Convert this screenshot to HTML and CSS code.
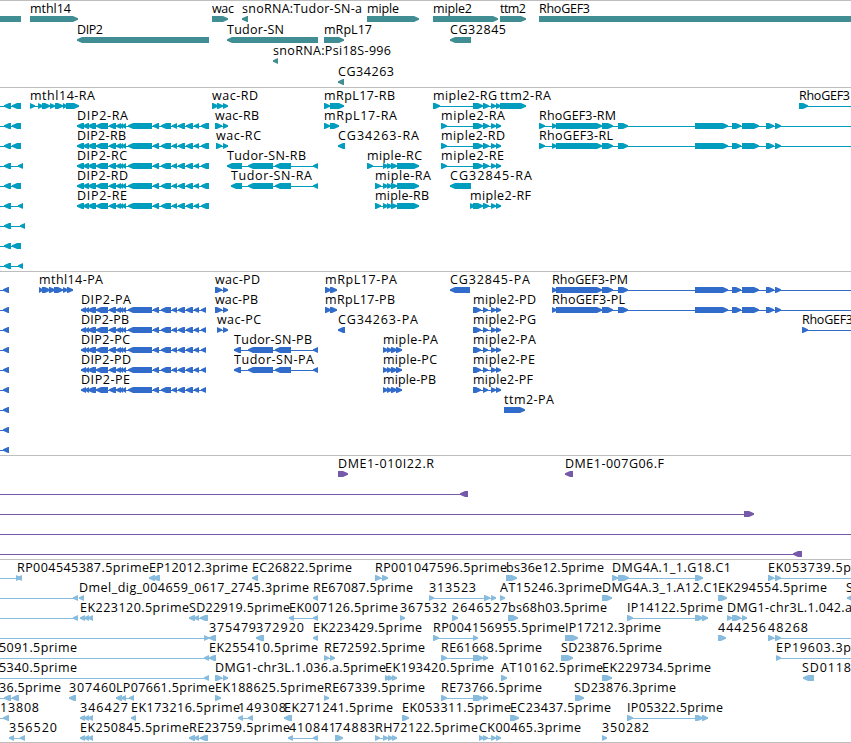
FILE: index.html
```html
<!DOCTYPE html>
<html lang="en">
<head>
    <meta charset="UTF-8">
    <title>Genome tracks</title>
    <link rel="stylesheet" href="styles.css">
</head>
<body>
    <div class="browser">
        <div class="track genes" id="genes"></div>
        <div class="track transcripts" id="transcripts"></div>
        <div class="track proteins" id="proteins"></div>
        <div class="track clones" id="clones"></div>
        <div class="track ests" id="ests"></div>
    </div>
    <script src="tracks.js"></script>
</body>
</html>
```
FILE: styles.css
```css
body {
    margin: 0;
    background-color: #fff;
}
.browser {
    display: flex;
    flex-direction: column;
    width: 851px;
    overflow: hidden;
    border-bottom: 1px solid #bebebe;
}
.track {
    box-sizing: border-box;
    border-top: 1px solid #bebebe;
    overflow: hidden;
}
.track svg {
    display: block;
}
.genes {
    height: 87px;
    color: #408e93;
}
.transcripts {
    height: 184px;
    color: #009dbf;
}
.proteins {
    height: 184px;
    color: #316ccb;
}
.clones {
    height: 104px;
    color: #7659a8;
}
.ests {
    height: 183px;
    color: #88bcde;
}
.exon {
    fill: currentColor;
}
.intron {
    fill: currentColor;
    shape-rendering: crispEdges;
}
.label {
    fill: #000;
    font-family: "Open Sans", "Noto Sans", sans-serif;
    font-size: 12.5px;
}
```
FILE: tracks.js
```js
// feature: [row, label, label start, label end, strand, exons, line start, line end]
var dip2 = [88,96, 96,108, 109,116, 116,121, 120,123, 122,126, 128,152, 153,159, 161,171, 172,177, 178,185, 186,193, 194,199];
var dip2R = [77,84, 83,89].concat(dip2, [201,209]);
var dip2P = [81,86, 85,89].concat(dip2, [201,206]);
var tudor = [248,273, 275,291, 313,318];
var miple = [383,388, 387,392, 391,397, 397,419];
var miple2 = [473,483, 483,489, 491,496, 496,501];
var miple2P = [473,481, 483,488, 491,496, 496,501];
var rho = [552,557, 556,602, 602,613, 618,628, 695,728, 732,741, 742,759, 766,774, 775,781];

var genes = [
    [0, '', 0, 0, '<', [-10,21]],
    [0, 'mthl14', 30, 71, '>', [30,78]],
    [0, 'wac', 212, 234, '>', [212,228]],
    [0, 'snoRNA:Tudor-SN-a', 242, 362, '<', [242,248]],
    [0, 'miple', 367, 399, '>', [367,419]],
    [0, 'miple2', 433, 472, '>', [433,498]],
    [0, 'ttm2', 500, 526, '>', [500,526]],
    [0, 'RhoGEF3', 539, 590, '>', [539,870]],
    [1, 'DIP2', 77, 103, '<', [77,209]],
    [1, 'Tudor-SN', 227, 284, '<', [227,318]],
    [1, 'mRpL17', 324, 372, '>', [324,344]],
    [1, 'CG32845', 450, 506, '<', [450,471]],
    [2, 'snoRNA:Psi18S-996', 273, 391, '<', [273,278]],
    [3, 'CG34263', 338, 394, '<', [338,344]]
];

var transcripts = [
    [0, '', 0, 0, '<', [4,11, 12,21], 0],
    [1, '', 0, 0, '<', [4,11, 12,21], 0],
    [2, '', 0, 0, '<', [4,11, 12,21], 0],
    [3, '', 0, 0, '<', [4,11, 18,23], 0],
    [4, '', 0, 0, '<', [4,11, 12,21], 0],
    [5, '', 0, 0, '<', [4,11, 18,23], 0],
    [6, '', 0, 0, '<', [4,11, 20,25], 0],
    [7, '', 0, 0, '<', [4,11, 12,21], 0],
    [8, '', 0, 0, '<', [4,11, 18,23], 0],
    [0, 'mthl14-RA', 30, 95, '>', [30,35, 38,43, 42,50, 50,55, 55,63, 63,67, 66,79]],
    [1, 'DIP2-RA', 77, 128, '<', dip2R],
    [2, 'DIP2-RB', 77, 126, '<', dip2R],
    [3, 'DIP2-RC', 77, 127, '<', dip2R],
    [4, 'DIP2-RD', 77, 128, '<', dip2R],
    [5, 'DIP2-RE', 77, 127, '<', dip2R],
    [0, 'wac-RD', 212, 258, '>', [212,218, 217,223, 223,228]],
    [1, 'wac-RB', 215, 259, '>', [215,222, 223,228]],
    [2, 'wac-RC', 216, 261, '>', [216,222, 223,228]],
    [3, 'Tudor-SN-RB', 227, 306, '<', [227,242].concat(tudor)],
    [4, 'Tudor-SN-RA', 231, 312, '<', [231,242].concat(tudor)],
    [0, 'mRpL17-RB', 324, 395, '>', [324,330, 330,344]],
    [1, 'mRpL17-RA', 324, 397, '>', [324,330, 330,339]],
    [2, 'CG34263-RA', 338, 419, '<', [338,345]],
    [3, 'miple-RC', 367, 422, '>', [367,373].concat(miple)],
    [4, 'miple-RA', 375, 431, '>', [375,381].concat(miple)],
    [5, 'miple-RB', 375, 429, '>', [375,381].concat(miple)],
    [0, 'miple2-RG', 433, 497, '>', [433,440].concat(miple2)],
    [0, 'ttm2-RA', 500, 551, '>', [500,526]],
    [1, 'miple2-RA', 441, 505, '>', [441,447].concat(miple2)],
    [2, 'miple2-RD', 441, 505, '>', [441,447].concat(miple2)],
    [3, 'miple2-RE', 441, 504, '>', [441,447].concat(miple2)],
    [4, 'CG32845-RA', 450, 532, '<', [450,471]],
    [5, 'miple2-RF', 470, 531, '>', [470,475].concat(miple2)],
    [0, 'RhoGEF3', 799, 850, '>', [799,808], 799, 851],
    [1, 'RhoGEF3-RM', 539, 616, '>', [539,545].concat(rho), 539, 851],
    [2, 'RhoGEF3-RL', 539, 613, '>', [539,545].concat(rho), 539, 851]
];

var proteins = [
    [0, 'mthl14-PA', 39, 103, '>', [39,43, 42,50, 49,55, 54,63, 63,68, 67,73]],
    [1, 'DIP2-PA', 81, 131, '<', dip2P],
    [2, 'DIP2-PB', 81, 129, '<', dip2P],
    [3, 'DIP2-PC', 81, 130, '<', dip2P],
    [4, 'DIP2-PD', 81, 131, '<', dip2P],
    [5, 'DIP2-PE', 81, 130, '<', dip2P],
    [0, 'wac-PD', 215, 260, '>', [215,222, 223,228]],
    [1, 'wac-PB', 215, 258, '>', [215,222, 223,228]],
    [2, 'wac-PC', 217, 261, '>', [217,222, 223,228]],
    [3, 'Tudor-SN-PB', 234, 312, '<', [234,241].concat(tudor)],
    [4, 'Tudor-SN-PA', 234, 314, '<', [234,241].concat(tudor)],
    [0, 'mRpL17-PA', 325, 397, '>', [325,331, 330,337]],
    [1, 'mRpL17-PB', 325, 395, '>', [325,331, 330,337]],
    [2, 'CG34263-PA', 338, 418, '<', [338,345]],
    [3, 'miple-PA', 383, 438, '>', [383,388, 387,392, 391,397, 396,402]],
    [4, 'miple-PC', 383, 437, '>', [383,388, 387,392, 391,397, 396,402]],
    [5, 'miple-PB', 383, 436, '>', [383,388, 387,392, 391,397, 396,402]],
    [0, 'CG32845-PA', 450, 530, '<', [450,470]],
    [1, 'miple2-PD', 473, 536, '>', miple2P],
    [2, 'miple2-PG', 473, 536, '>', miple2P],
    [3, 'miple2-PA', 473, 536, '>', miple2P],
    [4, 'miple2-PE', 473, 535, '>', miple2P],
    [5, 'miple2-PF', 473, 533, '>', miple2P],
    [6, 'ttm2-PA', 504, 554, '>', [504,525]],
    [0, 'RhoGEF3-PM', 552, 628, '>', rho, 552, 851],
    [1, 'RhoGEF3-PL', 552, 625, '>', rho, 552, 851],
    [2, 'RhoGEF3', 802, 853, '>', [802,808], 802, 851]
];
for (var i = 0; i < 9; i++) {
    proteins.push([i, '', 0, 0, '<', [3,9], 0]);
}

var clones = [
    [0, 'DME1-010I22.R', 338, 434, '>', [338,348]],
    [0, 'DME1-007G06.F', 565, 664, '<', [565,573]],
    [1, '', 0, 0, '<', [460,468], 0],
    [2, '', 0, 0, '>', [744,754], 0],
    [3, '', 0, 0, '>', [], 0, 851],
    [4, '', 0, 0, '<', [793,802], 0]
];

var ests = [
    [0, '', 0, 0, '>', [16,21], 0],
    [0, 'RP004545387.5prime', 17, 149, '<', [17,22]],
    [0, 'EP12012.3prime', 149, 248, '<', [149,155, 153,160]],
    [0, 'EC26822.5prime', 252, 352, '<', [252,258]],
    [0, 'RP001047596.5prime', 375, 507, '>', [375,381, 382,388]],
    [0, 'bs36e12.5prime', 506, 604, '>', [506,517]],
    [0, 'DMG4A.1_1.G18.C1', 612, 731, '>', [612,618, 618,629, 695,703]],
    [0, 'EK053739.5p', 768, 851, '>', [768,774, 775,781], 768, 851],
    [1, '', 0, 0, '<', [73,78], 0],
    [1, 'Dmel_dig_004659_0617_2745.3prime', 79, 309, '<', [79,84]],
    [1, 'RE67087.5prime', 313, 413, '<', [313,318]],
    [1, '313523', 429, 476, '>', [429,434, 484,490, 491,496]],
    [1, 'AT15246.3prime', 500, 602, '>', [500,505]],
    [1, 'DMG4A.3_1.A12.C1', 602, 719, '>', [602,612]],
    [1, 'EK294554.5prime', 718, 827, '>', [718,727]],
    [1, 'S', 846, 853, '<', [847,856]],
    [2, '', 0, 0, '<', [73,78], 0],
    [2, 'EK223120.5prime', 80, 189, '<', [80,85, 84,89, 88,93]],
    [2, 'SD22919.5prime', 189, 290, '<', [189,195, 194,199, 200,208]],
    [2, 'EK007126.5prime', 289, 398, '<', [289,294, 313,318]],
    [2, '367532', 400, 447, '>', [400,405]],
    [2, '2646527', 452, 508, '>', [452,458]],
    [2, 'bs68h03.5prime', 508, 607, '>', [508,518]],
    [2, 'IP14122.5prime', 627, 723, '>', [627,633, 695,703, 702,708]],
    [2, 'DMG1-chr3L.1.042.a', 727, 852, '>', [727,732, 732,741, 742,747]],
    [3, '', 0, 0, '>', [204,209], 0],
    [3, '375479', 209, 256, '<', [209,216]],
    [3, '372920', 256, 304, '<', [256,264]],
    [3, 'EK223429.5prime', 313, 422, '<', [313,318]],
    [3, 'RP004156955.5prime', 433, 565, '>', [433,439, 473,478]],
    [3, 'IP17212.3prime', 565, 661, '>', [565,578]],
    [3, '444256', 718, 766, '>', [718,726]],
    [3, '48268', 768, 808, '>', [768,774, 775,781], 768, 851],
    [4, '5091.5prime', -1, 77, '<', [204,209], 0],
    [4, 'EK255410.5prime', 209, 318, '<', [209,216]],
    [4, 'RE72592.5prime', 324, 425, '>', [324,329, 330,335]],
    [4, 'RE61668.5prime', 441, 542, '>', [441,447, 473,483, 483,488]],
    [4, 'SD23876.5prime', 561, 662, '>', [561,573]],
    [4, 'EP19603.3p', 776, 851, '>', [776,781], 776, 851],
    [5, '5340.5prime', -1, 77, '<', [204,209], 0],
    [5, 'DMG1-chr3L.1.036.a.5prime', 215, 386, '>', [215,222, 223,228]],
    [5, 'EK193420.5prime', 385, 494, '>', [385,390, 388,393, 392,397]],
    [5, 'AT10162.5prime', 501, 603, '>', [501,507]],
    [5, 'EK229734.5prime', 602, 711, '>', [602,612]],
    [5, 'SD0118', 802, 851, '<', [803,814]],
    [6, '36.5prime', -1, 61, '<', [4,11, 12,19], 0],
    [6, '307460', 69, 116, '<', [69,76]],
    [6, 'LP07661.5prime', 116, 215, '<', [116,122, 121,126, 129,134]],
    [6, 'EK188625.5prime', 215, 324, '>', [215,221]],
    [6, 'RE67339.5prime', 324, 425, '>', [324,329]],
    [6, 'RE73766.5prime', 441, 542, '>', [441,447, 473,483, 483,488]],
    [6, 'SD23876.3prime', 574, 676, '>', [575,584]],
    [7, '13808', 0, 39, '<', [3,9], 0],
    [7, '346427', 80, 128, '<', [80,85, 84,89, 88,93]],
    [7, 'EK173216.5prime', 131, 240, '<', [131,136]],
    [7, '149308', 238, 286, '<', [238,243, 248,253]],
    [7, 'EK271241.5prime', 284, 393, '<', [284,292]],
    [7, 'EK053311.5prime', 402, 511, '>', [402,409]],
    [7, 'EC23437.5prime', 510, 611, '>', [510,519]],
    [7, 'IP05322.5prime', 627, 723, '>', [627,633, 695,703, 702,708]],
    [8, '356520', 9, 57, '<', [9,14, 20,25]],
    [8, 'EK250845.5prime', 80, 189, '<', [80,85, 84,89, 88,93]],
    [8, 'RE23759.5prime', 189, 290, '<', [189,195, 194,199, 200,208]],
    [8, '410841', 289, 336, '<', [288,293, 313,318]],
    [8, '74883', 335, 375, '>', [335,343]],
    [8, 'RH72122.5prime', 375, 478, '>', [375,380, 383,388, 388,393, 392,397]],
    [8, 'CK00465.3prime', 479, 581, '>', [479,484, 483,488, 491,496, 496,501]],
    [8, '350282', 602, 649, '>', [602,607]]
];

// box with a pointed end on the strand side
function exon(a, b, y, strand) {
    var head = Math.min(5, b - a);
    var p;
    if (strand == '>') {
        p = [a, y, b - head, y, b, y + 2.2, b, y + 3.8, b - head, y + 6, a, y + 6];
    } else {
        p = [b, y, a + head, y, a, y + 2.2, a, y + 3.8, a + head, y + 6, b, y + 6];
    }
    return '<polygon class="exon" points="' + p.join(' ') + '"/>';
}

function draw(id, features, rowHeight) {
    var box = document.getElementById(id);
    var shapes = '';
    var labels = '';
    features.forEach(function(f) {
        var y = f[0] * rowHeight;
        var exons = f[5];
        var from = f[6] !== undefined ? f[6] : exons[0];
        var to = f[7] !== undefined ? f[7] : exons[exons.length - 1];
        shapes += '<rect class="intron" x="' + from + '" y="' + (y + 18) + '" width="' + (to - from) + '" height="1"/>';
        for (var i = 0; i < exons.length; i += 2) {
            shapes += exon(exons[i], exons[i + 1], y + 15, f[4]);
        }
        if (f[1]) {
            labels += '<text class="label" x="' + f[2] + '" y="' + (y + 12) + '" textLength="' + (f[3] - f[2]) + '">' + f[1] + '</text>';
        }
    });
    box.innerHTML = '<svg width="851" height="' + (box.offsetHeight - 1) + '">' + shapes + labels + '</svg>';
}

draw('genes', genes, 21);
draw('transcripts', transcripts, 20);
draw('proteins', proteins, 20);
draw('clones', clones, 20);
draw('ests', ests, 20);
```
